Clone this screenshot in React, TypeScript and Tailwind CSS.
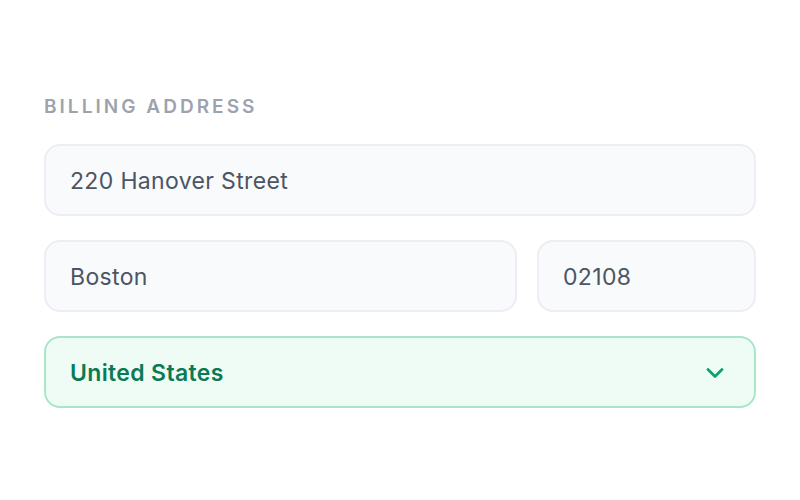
export default function App() {
  return (
    <div className="flex h-[500px] w-full items-center justify-center bg-white" style={{ fontFamily: "Inter, 'Noto Sans', sans-serif" }}>
      <div className="w-[712px] pt-[3px]">
        <div className="text-[19px] font-semibold leading-6 tracking-[0.16em] text-[#9ca3af]">BILLING ADDRESS</div>
        <div className="mt-[25px] flex flex-col gap-[24px]">
          <div className="flex h-[72px] items-center rounded-[16px] border-2 border-[#eceef3] bg-[#f9fafc] px-[24px] pt-[2px] text-[23px] tracking-[0.015em] text-[#4b5563]">
            220 Hanover Street
          </div>
          <div className="flex gap-[20px]">
            <div className="flex h-[72px] flex-1 items-center rounded-[16px] border-2 border-[#eceef3] bg-[#f9fafc] px-[24px] pt-[2px] text-[23px] tracking-[0.015em] text-[#4b5563]">
              Boston
            </div>
            <div className="flex h-[72px] w-[219px] items-center rounded-[16px] border-2 border-[#eceef3] bg-[#f9fafc] px-[24px] pt-[2px] text-[23px] tracking-[0.015em] text-[#4b5563]">
              02108
            </div>
          </div>
          <div className="flex h-[72px] items-center justify-between rounded-[16px] border-2 border-[#a9e6c9] bg-[#effcf5] pl-[24px] pr-[25px] pt-[2px] text-[23px] font-semibold tracking-[0.015em] text-[#0a7a55]">
            <span>United States</span>
            <svg width="28" height="28" viewBox="0 0 24 24" fill="none" stroke="#10a070" strokeWidth="2.4" strokeLinecap="round" strokeLinejoin="round">
              <path d="M6 9l6 6 6-6" />
            </svg>
          </div>
        </div>
      </div>
    </div>
  );
}
